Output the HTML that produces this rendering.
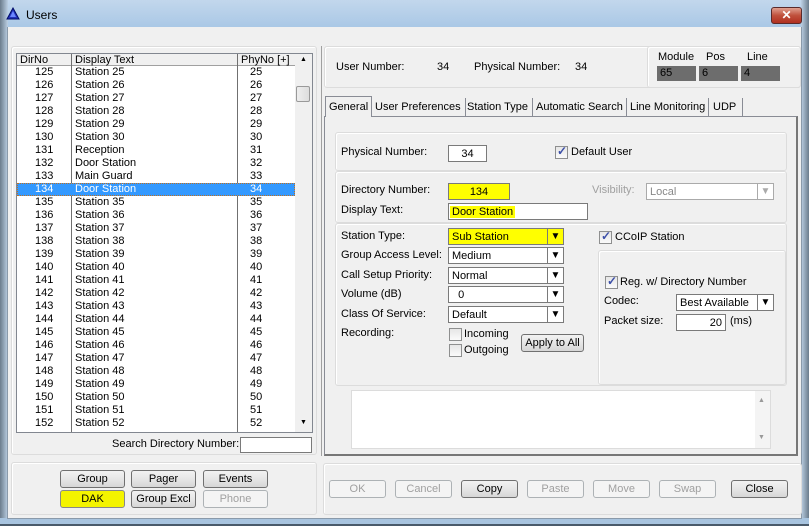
<!DOCTYPE html>
<html><head><meta charset="utf-8"><style>
*{box-sizing:border-box;margin:0;padding:0}
body{width:809px;height:526px;overflow:hidden;background:#f0f0f0;font-family:"Liberation Sans",Tahoma,sans-serif;font-size:11px;color:#000;position:relative}
.a{position:absolute;white-space:nowrap}
.grp{position:absolute;border:1px solid #dcdcdc;border-radius:3px;box-shadow:inset 1px 1px 0 #fff}
.btn{position:absolute;height:18px;border:1px solid #707070;border-radius:3px;background:linear-gradient(#f2f2f2,#e6e6e6 50%,#d6d6d6);text-align:center;line-height:16px}
.dis{color:#a0a0a0;border-color:#adb2b5;background:#f4f4f4}
.inp{position:absolute;height:17px;border:1px solid #7a7a7a;background:#fff;padding-left:3px;line-height:16px}
.cb{position:absolute;width:13px;height:13px;border:1px solid #8e8f8f;background:linear-gradient(#e6e6e6,#fafafa)}
.cb.on:after{content:"✓";position:absolute;left:1px;top:-3px;font-size:12px;color:#3c4fa8;font-weight:bold}
.dd{position:absolute;width:16px;right:0;top:0;bottom:0;border-left:1px solid #7a7a7a;text-align:center;font-size:10px;line-height:15px}
.hl{background:#ffff00}
.row{position:absolute;left:17px;width:278px;height:13px;line-height:13px}
.row span{position:absolute}
</style></head><body>
<div class="a" style="left:0;top:0;width:809px;height:27px;background:linear-gradient(#c2d7ec,#aac8e6)"></div>
<div class="a" style="left:0;top:0;width:8px;height:526px;background:linear-gradient(90deg,#6b7c8c,#bcd0e4)"></div>
<div class="a" style="left:801px;top:0;width:8px;height:526px;background:linear-gradient(90deg,#bcd0e4,#6b7c8c)"></div>
<div class="a" style="left:0;top:518px;width:809px;height:8px;background:#a8c4df;border-bottom:2px solid #4a5a6a"></div>
<div class="a" style="left:7px;top:27px;width:795px;height:492px;background:#f0f0f0;border-left:1px solid #8a9aaa;border-right:1px solid #8a9aaa;border-bottom:1px solid #8a9aaa"></div>
<svg class="a" style="left:6px;top:7px" width="14" height="13"><polygon points="7,1 13,12 1,12" fill="#2233bb" stroke="#000a66"/><polygon points="7,4 10,10 4,10" fill="#6b86ff"/></svg>
<div class="a" style="left:26px;top:8px;font-size:12px">Users</div>
<div class="a" style="left:771px;top:7px;width:31px;height:17px;border:1px solid #5a2a2a;border-radius:3px;background:linear-gradient(#e0a090,#c0503c 50%,#b03020);color:#fff;text-align:center;font-weight:bold;font-size:12px;line-height:14px">✕</div>

<div class="grp" style="left:11px;top:46px;width:306px;height:409px"></div>
<div class="a" style="left:16px;top:53px;width:297px;height:380px;border:1px solid #828790;background:#fff"></div>
<div class="a" style="left:17px;top:54px;width:278px;height:12px;background:#f0f0f0;border-bottom:1px solid #a0a0a0"></div>
<div class="a" style="left:71px;top:54px;width:1px;height:378px;background:#707070"></div>
<div class="a" style="left:237px;top:54px;width:1px;height:378px;background:#707070"></div>
<div class="a" style="left:20px;top:54px;line-height:13px">DirNo</div>
<div class="a" style="left:75px;top:54px;line-height:13px">Display Text</div>
<div class="a" style="left:241px;top:54px;line-height:13px">PhyNo [+]</div>
<div class="a" style="left:295px;top:54px;width:17px;height:378px;background:#f0f0f0"></div>
<div class="a" style="left:300px;top:56px;font-size:7px">▲</div>
<div class="a" style="left:300px;top:419px;font-size:7px">▼</div>
<div class="a" style="left:296px;top:86px;width:14px;height:16px;border:1px solid #999;border-radius:2px;background:linear-gradient(90deg,#eee,#ddd)"></div>
<div id="rows"></div>
<div class="a" style="left:112px;top:438px">Search Directory Number:</div>
<div class="a" style="left:240px;top:437px;width:72px;height:16px;border:1px solid #7a7a7a;background:#fff"></div>

<div class="grp" style="left:11px;top:462px;width:306px;height:53px"></div>
<div class="btn" style="left:60px;top:470px;width:65px">Group</div>
<div class="btn" style="left:131px;top:470px;width:65px">Pager</div>
<div class="btn" style="left:203px;top:470px;width:65px">Events</div>
<div class="btn" style="left:60px;top:490px;width:65px;background:#f4f400;border-color:#888">DAK</div>
<div class="btn" style="left:131px;top:490px;width:65px">Group Excl</div>
<div class="btn dis" style="left:203px;top:490px;width:65px">Phone</div>

<div class="a" style="left:321px;top:46px;width:1px;height:410px;background:#a0a0a0"></div>
<div class="grp" style="left:324px;top:46px;width:477px;height:42px"></div>
<div class="a" style="left:336px;top:61px">User Number:</div>
<div class="a" style="left:437px;top:61px">34</div>
<div class="a" style="left:474px;top:61px">Physical Number:</div>
<div class="a" style="left:575px;top:61px">34</div>
<div class="grp" style="left:647px;top:46px;width:154px;height:42px"></div>
<div class="a" style="left:658px;top:51px">Module</div><div class="a" style="left:706px;top:51px">Pos</div><div class="a" style="left:747px;top:51px">Line</div>
<div class="a" style="left:657px;top:66px;width:39px;height:15px;background:#6d6d6d;padding-left:3px;line-height:15px">65</div>
<div class="a" style="left:699px;top:66px;width:39px;height:15px;background:#6d6d6d;padding-left:3px;line-height:15px">6</div>
<div class="a" style="left:741px;top:66px;width:39px;height:15px;background:#6d6d6d;padding-left:3px;line-height:15px">4</div>

<div class="a" style="left:324px;top:116px;width:474px;height:340px;border:1px solid #898c95;border-right:2px solid #777;border-bottom:2px solid #777;background:#f0f0f0"></div>
<div class="a" style="left:325px;top:96px;width:47px;height:21px;background:#f0f0f0;border:1px solid #898c95;border-bottom:none;padding:4px 0 0 3px">General</div>
<div class="a" style="left:373px;top:98px;height:18px;border-right:1px solid #898c95;padding:3px 4px 0 2px">User Preferences</div>
<div class="a" style="left:463px;top:98px;height:18px;border-right:1px solid #898c95;padding:3px 4px 0 4px">Station Type</div>
<div class="a" style="left:533px;top:98px;height:18px;border-right:1px solid #898c95;padding:3px 3px 0 3px">Automatic Search</div>
<div class="a" style="left:627px;top:98px;height:18px;border-right:1px solid #898c95;padding:3px 3px 0 3px">Line Monitoring</div>
<div class="a" style="left:709px;top:98px;height:18px;border-right:1px solid #898c95;padding:3px 6px 0 4px">UDP</div>

<div class="grp" style="left:335px;top:132px;width:452px;height:39px"></div>
<div class="a" style="left:341px;top:146px">Physical Number:</div>
<div class="inp" style="left:448px;top:145px;width:39px;text-align:center;padding:0">34</div>
<div class="cb on" style="left:555px;top:146px"></div><div class="a" style="left:571px;top:146px">Default User</div>

<div class="grp" style="left:335px;top:171px;width:452px;height:52px"></div>
<div class="a" style="left:341px;top:184px">Directory Number:</div>
<div class="inp hl" style="left:448px;top:183px;width:62px;text-align:center;padding:0">134</div>
<div class="a" style="left:592px;top:184px;color:#a0a0a0">Visibility:</div>
<div class="inp" style="left:646px;top:183px;width:128px;color:#888;border-color:#aaa">Local<div class="dd" style="border-color:#aaa;color:#aaa">▼</div></div>
<div class="a" style="left:341px;top:204px">Display Text:</div>
<div class="inp" style="left:448px;top:203px;width:140px"><span class="hl" style="margin-left:-2px;padding:0 2px">Door Station</span></div>

<div class="grp" style="left:335px;top:223px;width:452px;height:163px"></div>
<div class="grp" style="left:598px;top:250px;width:188px;height:135px"></div>
<div class="a" style="left:341px;top:230px">Station Type:</div>
<div class="a" style="left:341px;top:249px">Group Access Level:</div>
<div class="a" style="left:341px;top:269px">Call Setup Priority:</div>
<div class="a" style="left:341px;top:288px">Volume (dB)</div>
<div class="a" style="left:341px;top:308px">Class Of Service:</div>
<div class="a" style="left:341px;top:327px">Recording:</div>
<div class="inp hl" style="left:448px;top:228px;width:116px">Sub Station<div class="dd">▼</div></div>
<div class="inp" style="left:448px;top:247px;width:116px">Medium<div class="dd">▼</div></div>
<div class="inp" style="left:448px;top:267px;width:116px">Normal<div class="dd">▼</div></div>
<div class="inp" style="left:448px;top:286px;width:116px">&nbsp;&nbsp;0<div class="dd">▼</div></div>
<div class="inp" style="left:448px;top:306px;width:116px">Default<div class="dd">▼</div></div>
<div class="cb" style="left:449px;top:328px"></div><div class="a" style="left:464px;top:328px">Incoming</div>
<div class="cb" style="left:449px;top:344px"></div><div class="a" style="left:464px;top:344px">Outgoing</div>
<div class="btn" style="left:521px;top:334px;width:63px">Apply to All</div>
<div class="cb on" style="left:599px;top:231px"></div><div class="a" style="left:615px;top:231px">CCoIP Station</div>
<div class="cb on" style="left:605px;top:276px"></div><div class="a" style="left:620px;top:276px">Reg. w/ Directory Number</div>
<div class="a" style="left:604px;top:295px">Codec:</div>
<div class="inp" style="left:676px;top:294px;width:98px">Best Available<div class="dd">▼</div></div>
<div class="a" style="left:604px;top:315px">Packet size:</div>
<div class="inp" style="left:676px;top:314px;width:50px;text-align:right;padding-right:3px">20</div>
<div class="a" style="left:730px;top:315px">(ms)</div>
<div class="a" style="left:351px;top:390px;width:420px;height:59px;background:#fff;border:1px solid #dcdcdc"></div>
<div class="a" style="left:755px;top:391px;width:15px;height:57px;background:#f4f4f4"></div>
<div class="a" style="left:758px;top:397px;font-size:7px;color:#999">▲</div>
<div class="a" style="left:758px;top:434px;font-size:7px;color:#999">▼</div>

<div class="grp" style="left:323px;top:463px;width:479px;height:52px"></div>
<div class="btn dis" style="left:329px;top:480px;width:57px">OK</div>
<div class="btn dis" style="left:395px;top:480px;width:57px">Cancel</div>
<div class="btn" style="left:461px;top:480px;width:57px">Copy</div>
<div class="btn dis" style="left:527px;top:480px;width:57px">Paste</div>
<div class="btn dis" style="left:593px;top:480px;width:57px">Move</div>
<div class="btn dis" style="left:659px;top:480px;width:57px">Swap</div>
<div class="btn" style="left:731px;top:480px;width:57px">Close</div>
<script>
var d=["Station 25","Station 26","Station 27","Station 28","Station 29","Station 30","Reception","Door Station","Main Guard","Door Station"];
var h="";
for(var i=0;i<28;i++){var n=125+i,t=d[i]||("Station "+(n-100)),s=i==9;
h+='<div class="row" style="top:'+(66+13*i)+'px;'+(s?'background:#3399ff;color:#fff;outline:1px dotted #c07020;outline-offset:-1px':'')+'"><span style="left:18px">'+n+'</span><span style="left:58px">'+t+'</span><span style="left:233px">'+(n-100)+'</span></div>';}
document.getElementById("rows").innerHTML=h;
</script>
</body></html>
